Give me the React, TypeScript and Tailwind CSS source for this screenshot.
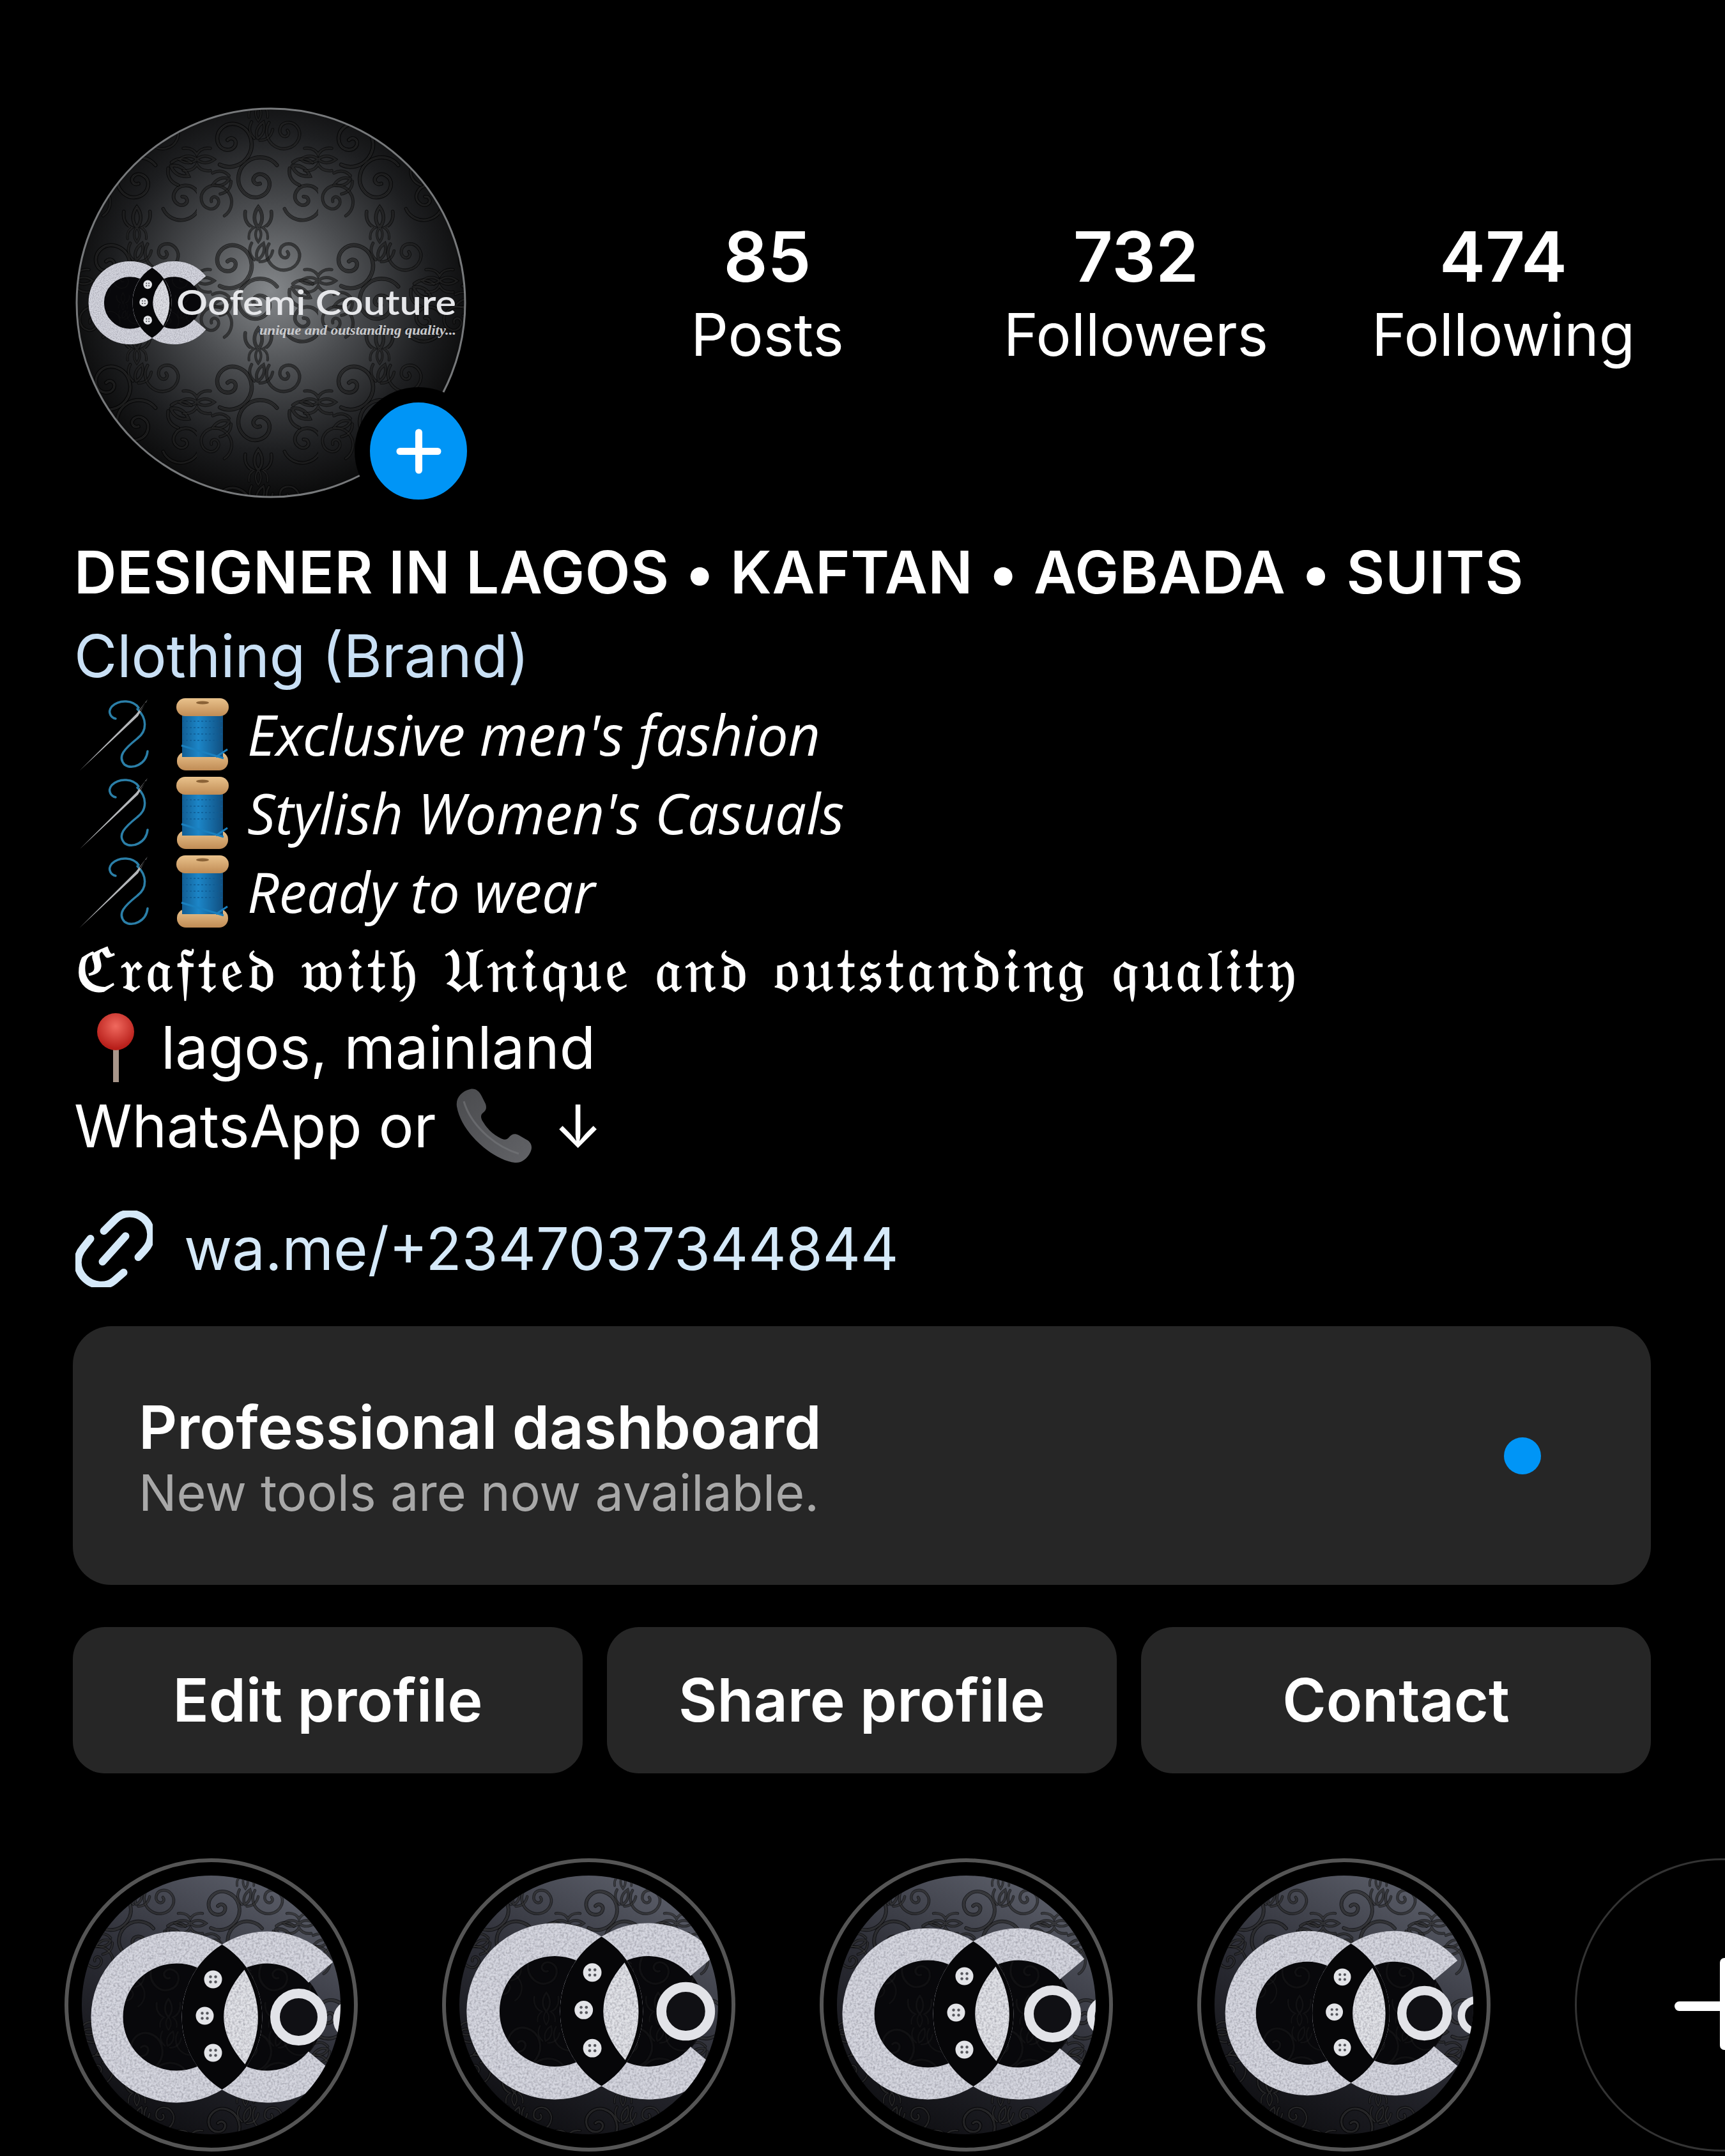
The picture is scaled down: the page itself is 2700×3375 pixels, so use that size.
import React from "react";

const SPIRAL = "M0 0c6-6 15-1 12 8-4 10-22 10-27-4-5-17 11-33 30-28 22 7 29 33 15 52-10 13-28 17-42 10";
const FAN = "M0 0c-9-10-9-24 0-36 9 12 9 26 0 36M-6 2c-13-5-19-16-17-30M6 2c13-5 19-16 17-30";

// one round of ornaments; the ones on the edge are repeated so the tile wraps
const ornaments: [string, number, number, number, number][] = [
  [SPIRAL, 38, 42, 0, 0.8],
  [SPIRAL, 112, 30, 95, 0.62],
  [SPIRAL, 78, 96, 205, 0.78],
  [SPIRAL, 18, 118, 300, 0.6],
  [SPIRAL, 132, 112, 40, 0.7],
  [FAN, 75, 40, 20, 0.6],
  [FAN, 40, 90, 250, 0.6],
  [FAN, 118, 74, 120, 0.7],
  [FAN, 76, 150, 0, 0.7],
  [FAN, 76, 0, 180, 0.5],
  [FAN, 0, 66, 90, 0.6],
  [FAN, 150, 66, 270, 0.6],
];

// swirl wallpaper tile shared by the avatar and the highlight covers
function SwirlPattern({ id, size = 150, dark = 0.6, light = 0.14 }: { id: string; size?: number; dark?: number; light?: number }) {
  const swirls = ornaments.map(([d, x, y, r, s], i) => (
    <path key={i} d={d} transform={`translate(${x} ${y}) rotate(${r}) scale(${s})`} />
  ));
  return (
    <pattern id={id} width={size} height={size} patternUnits="userSpaceOnUse" viewBox="0 0 150 150">
      <g fill="none" stroke="#000" strokeOpacity={dark} strokeWidth="6.5" strokeLinecap="round">{swirls}</g>
      <g fill="none" stroke="#fff" strokeOpacity={light} strokeWidth="3" strokeLinecap="round">{swirls}</g>
      <g fill="none" stroke="#000" strokeOpacity={dark} strokeWidth="0.8" strokeLinecap="round">{swirls}</g>
    </pattern>
  );
}

// filter box is in user space: the object box of a ring leaves out its stroke
function GrainFilter({ id }: { id: string }) {
  return (
    <filter id={id} filterUnits="userSpaceOnUse" x="-300" y="-300" width="800" height="600">
      <feTurbulence type="fractalNoise" baseFrequency="0.3" numOctaves="2" result="n" />
      <feColorMatrix in="n" type="matrix" values="0 0 0 0 0.25 0 0 0 0 0.25 0 0 0 0 0.3 0 0 0 1.4 -0.5" result="d" />
      <feComposite in="d" in2="SourceGraphic" operator="in" result="c" />
      <feMerge>
        <feMergeNode in="SourceGraphic" />
        <feMergeNode in="c" />
      </feMerge>
    </filter>
  );
}

// the double C mark, origin on the point where the two rings cross
function LogoMark({ patternId, grainId, letterX, secondO = false }: { patternId: string; grainId: string; letterX?: number; secondO?: boolean }) {
  const silver = "#d6d7e0";
  return (
    <g>
      <circle cx="-71" cy="0" r="86" fill="#08080b" />
      <circle cx="-71" cy="0" r="86" fill={`url(#${patternId})`} opacity="0.4" />
      <circle cx="71" cy="0" r="86" fill="#08080b" />
      <circle cx="71" cy="0" r="86" fill={`url(#${patternId})`} opacity="0.4" />
      <g filter={`url(#${grainId})`}>
        <circle cx="-71" cy="0" r="109" fill="none" stroke={silver} strokeWidth="50" />
        <path d="M154.5 -70A109 109 0 1 0 154.5 70" fill="none" stroke={silver} strokeWidth="50" />
      </g>
      <path d="M0 -113.6A134 134 0 0 1 0 113.6A134 134 0 0 1 0 -113.6Z" fill="#060608" />
      <path d="M35 -74Q77 0 36 74Q-30 0 35 -74Z" fill="#e2e3e8" filter={`url(#${grainId})`} />
      {[[-14, -59], [-27, -2], [-14, 56]].map(([x, y]) => (
        <g key={y} transform={`translate(${x} ${y})`}>
          <circle r="14" fill="#e3e4e8" />
          {[[-4, -4], [4, -4], [-4, 4], [4, 4]].map(([a, b]) => (
            <circle key={`${a}${b}`} cx={a} cy={b} r="2.2" fill="#55565c" />
          ))}
        </g>
      ))}
      {letterX !== undefined && <circle cx={letterX} cy="0" r="37" fill="#101014" stroke="#e2e3e8" strokeWidth="15" />}
      {letterX !== undefined && secondO && <circle cx={letterX + 86} cy="4" r="26" fill="#101014" stroke="#e2e3e8" strokeWidth="12" />}
    </g>
  );
}

function Avatar() {
  return (
    <div className="relative h-[616px] w-[612px] shrink-0">
      <svg width="612" height="616" viewBox="0 0 612 616">
        <defs>
          <radialGradient id="avBg" cx="0.5" cy="0.47" r="0.55">
            <stop offset="0" stopColor="#85888b" />
            <stop offset="0.4" stopColor="#4a4c4f" />
            <stop offset="0.75" stopColor="#1d1e20" />
            <stop offset="1" stopColor="#080808" />
          </radialGradient>
          <SwirlPattern id="avSwirl" size={190} dark={0.55} light={0.1} />
          <GrainFilter id="avGrain" />
        </defs>
        <circle cx="306" cy="308" r="304" fill="url(#avBg)" />
        <circle cx="306" cy="308" r="304" fill="url(#avSwirl)" />
        <circle cx="306" cy="308" r="304" fill="none" stroke="#77797b" strokeWidth="3" />
        <g transform="translate(120 308) scale(0.485)">
          <LogoMark patternId="avSwirl" grainId="avGrain" />
        </g>
        <text x="158" y="327" textLength="438" lengthAdjust="spacingAndGlyphs" fontFamily="Lato, sans-serif" fontWeight="600" fontSize="53" fill="#e6e7ea">
          Oofemi Couture
        </text>
        <text x="288" y="358" textLength="308" lengthAdjust="spacingAndGlyphs" fontFamily="'Liberation Serif', serif" fontStyle="italic" fontWeight="700" fontSize="22" fill="#c9cacd">
          unique and outstanding quality...
        </text>
      </svg>
      <div className="absolute left-[437px] top-[440px] flex h-[200px] w-[200px] items-center justify-center rounded-full border-[24px] border-black bg-[#0095f6]">
        <svg width="71" height="71" viewBox="0 0 71 71" stroke="#fff" strokeWidth="11" strokeLinecap="round">
          <line x1="35.5" y1="6" x2="35.5" y2="65" />
          <line x1="6" y1="35.5" x2="65" y2="35.5" />
        </svg>
      </div>
    </div>
  );
}

function Stat({ value, label, className }: { value: string; label: string; className: string }) {
  return (
    <div className={`flex flex-col items-center ${className}`}>
      <span className="text-[108px] font-semibold leading-[122px] text-white">{value}</span>
      <span className="text-[92px] leading-[122px] text-white">{label}</span>
    </div>
  );
}

function NeedleEmoji() {
  return (
    <svg width="110" height="112" viewBox="0 0 110 112" fill="none" className="shrink-0">
      <path d="M92 14C84 2 62 0 50 12C42 22 50 30 56 31" stroke="#2b7fa8" strokeWidth="3.5" strokeLinecap="round" />
      <path d="M90 16C105 30 106 50 90 62C70 78 58 90 70 103C82 112 104 102 106 82" stroke="#2b7fa8" strokeWidth="3.5" strokeLinecap="round" />
      <path d="M0 112L88 24L106 1L91 27Z" fill="#b4b6b9" />
      <path d="M94 19L103 6" stroke="#000" strokeWidth="1.4" />
    </svg>
  );
}

function SpoolEmoji() {
  return (
    <svg width="82" height="113" viewBox="0 0 82 113" className="shrink-0">
      <defs>
        <linearGradient id="capTan" x1="0" y1="0" x2="0" y2="1">
          <stop offset="0" stopColor="#e9c28c" />
          <stop offset="1" stopColor="#c08c55" />
        </linearGradient>
        <linearGradient id="threadBlue" x1="0" y1="0" x2="1" y2="0">
          <stop offset="0" stopColor="#125d92" />
          <stop offset="0.4" stopColor="#1c86c8" />
          <stop offset="1" stopColor="#104f80" />
        </linearGradient>
      </defs>
      <rect x="1" y="84" width="80" height="29" rx="14" fill="url(#capTan)" />
      <rect x="9" y="18" width="64" height="74" fill="url(#threadBlue)" />
      <path d="M9 36H73M9 46H73M9 56H73M9 66H73" stroke="#0f5c94" strokeWidth="1.5" strokeDasharray="3 3" />
      <path d="M8 74L74 94M62 92L80 80" stroke="#1a80bf" strokeWidth="3" />
      <rect x="0" y="0" width="82" height="28" rx="14" fill="url(#capTan)" />
      <ellipse cx="41" cy="7" rx="10" ry="2.4" fill="#8a6236" />
    </svg>
  );
}

function ThreadLine({ text }: { text: string }) {
  return (
    <div className="flex h-[123px] items-center">
      <span className="ml-[7px] flex items-center gap-[41px]">
        <NeedleEmoji />
        <SpoolEmoji />
      </span>
      <span className="ml-[29px] font-['Open_Sans',sans-serif] text-[87px] italic text-white">{text}</span>
    </div>
  );
}

function PinEmoji() {
  return (
    <svg width="58" height="108" viewBox="0 0 58 108" className="shrink-0">
      <defs>
        <radialGradient id="pinHead" cx="0.5" cy="0.35" r="0.6">
          <stop offset="0" stopColor="#f0695e" />
          <stop offset="1" stopColor="#b81f1a" />
        </radialGradient>
      </defs>
      <rect x="25" y="52" width="9" height="56" fill="#a8968a" />
      <ellipse cx="29" cy="29" rx="29" ry="29" fill="url(#pinHead)" />
    </svg>
  );
}

function PhoneEmoji() {
  return (
    <svg width="121" height="117" viewBox="0 0 121 117" className="shrink-0">
      <defs>
        <linearGradient id="phoneBody" x1="0" y1="0" x2="1" y2="1">
          <stop offset="0" stopColor="#4a4b4e" />
          <stop offset="1" stopColor="#626367" />
        </linearGradient>
      </defs>
      <path d="M24 1C32-1 38 4 42 12L48 24C50 30 49 34 44 38C40 41 40 46 44 52C52 65 60 72 72 78C78 81 82 80 85 76C89 71 94 70 100 73L112 80C120 84 122 92 118 100C113 110 104 117 94 116C60 112 10 70 3 28C1 14 11 4 24 1Z" fill="url(#phoneBody)" />
      <path d="M14 20C24 55 60 90 100 102" fill="none" stroke="#77787c" strokeWidth="3" strokeOpacity="0.6" />
    </svg>
  );
}

function LinkIcon() {
  return (
    <svg width="121" height="120" viewBox="0 0 120 120" fill="none" stroke="#d5e9f9" strokeWidth="12" strokeLinecap="round" className="shrink-0">
      <path d="M98 73L108 62C122 47 120 25 107 13C93 1 74 2 62 14L44 32" />
      <path d="M75 97L60 110C48 120 27 119 14 106C0 92 0 72 12 58L23 44" />
      <path d="M42 80L78 40" />
    </svg>
  );
}

function ProfileButton({ label }: { label: string }) {
  return (
    <div className="flex h-[229px] flex-1 items-center justify-center rounded-[50px] bg-[#262626] text-[93px] font-semibold text-white">
      {label}
    </div>
  );
}

const highlights = [
  { dx: 17, dy: 19, s: 1, o: 120, second: true },
  { dx: 20, dy: 10, s: 1.03, o: 128, second: true },
  { dx: 11, dy: 14, s: 1, o: 124, second: true },
  { dx: 11, dy: 13, s: 0.96, o: 120, second: true },
];

function Highlight({ index }: { index: number }) {
  const h = highlights[index];
  return (
    <div className="flex h-[459px] w-[459px] shrink-0 items-center justify-center rounded-full border-[6px] border-[#555555]">
      <svg width="405" height="405" viewBox="0 0 405 405">
        <defs>
          <linearGradient id={`hlBg${index}`} x1="0.2" y1="1" x2="0.7" y2="0">
            <stop offset="0" stopColor="#0c0c0f" />
            <stop offset="0.5" stopColor="#2a2b33" />
            <stop offset="1" stopColor="#5a5d68" />
          </linearGradient>
          <SwirlPattern id={`hlSwirl${index}`} size={170} dark={0.55} light={0.14} />
          <GrainFilter id={`hlGrain${index}`} />
          <clipPath id={`hlClip${index}`}>
            <circle cx="202.5" cy="202.5" r="202.5" />
          </clipPath>
        </defs>
        <g clipPath={`url(#hlClip${index})`}>
          <rect width="405" height="405" fill={`url(#hlBg${index})`} />
          <rect width="405" height="405" fill={`url(#hlSwirl${index})`} />
          <g transform={`translate(${202.5 + h.dx} ${202.5 + h.dy}) scale(${h.s})`}>
            <LogoMark patternId={`hlSwirl${index}`} grainId={`hlGrain${index}`} letterX={h.o} secondO={h.second} />
          </g>
        </g>
      </svg>
    </div>
  );
}

export default function App() {
  return (
    <div className="h-[3375px] w-[2700px] overflow-hidden bg-black pl-[118px] pt-[166px] font-[Inter,sans-serif] text-white">
      <div className="flex">
        <Avatar />
        <div className="flex pt-[175px]">
          <Stat value="85" label="Posts" className="ml-[351px] w-[240px]" />
          <Stat value="732" label="Followers" className="ml-[237px] w-[440px]" />
          <Stat value="474" label="Following" className="ml-[135px] w-[440px]" />
        </div>
      </div>

      <div className="-ml-[2px] mt-[52px] flex h-[123px] items-center text-[92px] font-semibold tracking-[0.8px]">DESIGNER IN LAGOS • KAFTAN • AGBADA • SUITS</div>
      <div className="-ml-[2px] mt-[8px] flex h-[123px] items-center text-[92px] text-[#c9e0f5]">Clothing (Brand)</div>
      <ThreadLine text="Exclusive men's fashion" />
      <ThreadLine text="Stylish Women's Casuals" />
      <ThreadLine text="Ready to wear" />
      <div className="flex h-[123px] items-center font-['DejaVu_Serif','Liberation_Serif',serif] text-[96px] tracking-[5.6px] [-webkit-text-stroke:1.5px_white]">
        ℭ𝔯𝔞𝔣𝔱𝔢𝔡 𝔴𝔦𝔱𝔥 𝔘𝔫𝔦𝔮𝔲𝔢 𝔞𝔫𝔡 𝔬𝔲𝔱𝔰𝔱𝔞𝔫𝔡𝔦𝔫𝔤 𝔮𝔲𝔞𝔩𝔦𝔱𝔶
      </div>
      <div className="flex h-[120px] items-center text-[92px]">
        <span className="ml-[34px]"><PinEmoji /></span>
        <span className="ml-[42px]">lagos, mainland</span>
      </div>
      <div className="-ml-[2px] flex h-[125px] items-center text-[92px]">
        <span>WhatsApp or</span>
        <span className="ml-[30px]"><PhoneEmoji /></span>
        <span className="ml-[33px]">↓</span>
      </div>
      <div className="mt-[70px] flex h-[120px] items-center">
        <LinkIcon />
        <span className="ml-[49px] text-[92px] text-[#d5e9f9]">wa.me/+2347037344844</span>
      </div>

      <div className="-ml-[4px] mt-[61px] flex h-[405px] w-[2470px] items-center justify-between rounded-[60px] bg-[#262626] pl-[103px] pr-[172px]">
        <div className="flex flex-col pt-[10px]">
          <span className="text-[93.5px] font-semibold leading-[104px]">Professional dashboard</span>
          <span className="text-[79px] leading-[100px] text-[#a8a8a8]">New tools are now available.</span>
        </div>
        <span className="h-[58px] w-[58px] rounded-full bg-[#0095f6]" />
      </div>

      <div className="-ml-[4px] mt-[66px] flex w-[2470px] gap-[38px]">
        <ProfileButton label="Edit profile" />
        <ProfileButton label="Share profile" />
        <ProfileButton label="Contact" />
      </div>

      <div className="-ml-[17px] mt-[133px] flex gap-[132px]">
        <Highlight index={0} />
        <Highlight index={1} />
        <Highlight index={2} />
        <Highlight index={3} />
        <div className="relative h-[459px] w-[459px] shrink-0 rounded-full border-[3px] border-[#333333]">
          <span className="absolute left-[153px] top-[221px] h-[15px] w-[150px] rounded-full bg-white" />
          <span className="absolute left-[224px] top-[153px] h-[144px] w-[14px] rounded-full bg-white" />
        </div>
      </div>
    </div>
  );
}
